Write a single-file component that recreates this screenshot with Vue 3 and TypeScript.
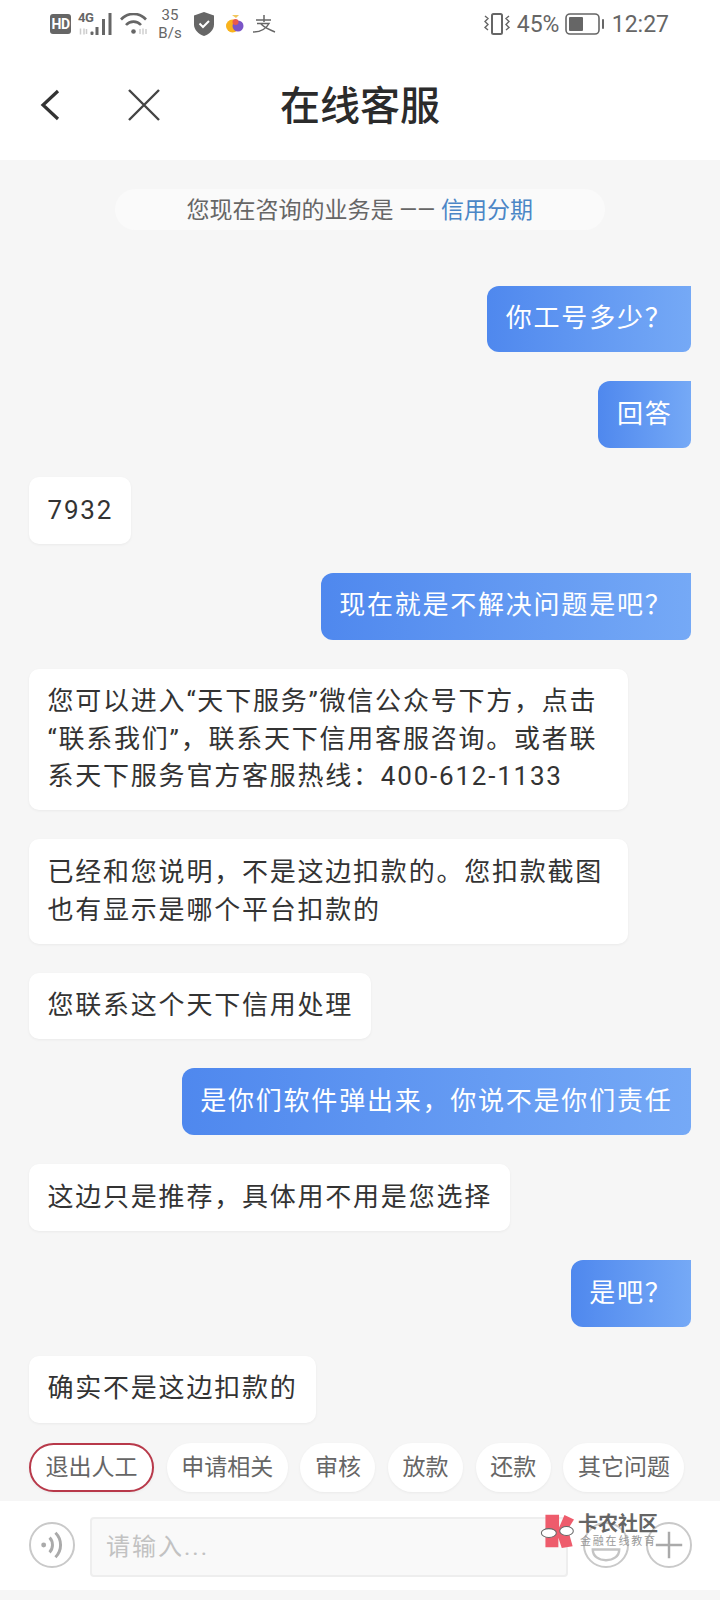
<script setup lang="ts">
interface Message {
  from: 'me' | 'agent'
  text: string
}

const messages: Message[] = [
  { from: 'me', text: '你工号多少？' },
  { from: 'me', text: '回答' },
  { from: 'agent', text: '7932' },
  { from: 'me', text: '现在就是不解决问题是吧？' },
  { from: 'agent', text: '您可以进入“天下服务”微信公众号下方，点击\u200b“联系我们”，联系天下信用客服咨询。或者联系天下服务官方客服热线：400-612-1133' },
  { from: 'agent', text: '已经和您说明，不是这边扣款的。您扣款截图也有显示是哪个平台扣款的' },
  { from: 'agent', text: '您联系这个天下信用处理' },
  { from: 'me', text: '是你们软件弹出来，你说不是你们责任' },
  { from: 'agent', text: '这边只是推荐，具体用不用是您选择' },
  { from: 'me', text: '是吧？' },
  { from: 'agent', text: '确实不是这边扣款的' },
]

const chips = ['退出人工', '申请相关', '审核', '放款', '还款', '其它问题']
</script>

<template>
  <div class="page">
    <div class="status">
      <div class="status-left">
        <span class="hd">HD</span>
        <span class="signal">
          <span class="g4">4G</span>
          <svg width="36" height="22" viewBox="0 0 36 22" fill="none">
            <path d="M2.500 15.500v6M6 15.500v6M8.500 16v5" stroke="#ccc" stroke-width="1.500" />
            <rect x="12.500" y="18.500" width="3" height="3.500" rx="1" fill="#666" />
            <rect x="17.500" y="14" width="3" height="8" fill="#666" />
            <rect x="24" y="6" width="3" height="16" fill="#666" />
            <rect x="30.500" y="0" width="3" height="22" fill="#666" />
          </svg>
        </span>
        <svg class="wifi" width="28" height="22" viewBox="0 0 28 22" fill="none">
          <path d="M1 6.500C8 -1 19 -1 26 6.500M6 12C10 7.500 17 7.500 21 12" stroke="#666" stroke-width="2.600" />
          <circle cx="13.500" cy="18.500" r="2.300" fill="#666" />
          <path d="M20 16v5M23 15.500v6M26 16v5" stroke="#ccc" stroke-width="1.400" />
        </svg>
        <span class="speed">35<br />B/s</span>
        <svg class="shield" width="22" height="24" viewBox="0 0 22 24">
          <path d="M11 0l10 3.500v9c0 5.500-4.500 9.500-10 11.500C5.500 22 1 18 1 12.500v-9z" fill="#666" />
          <path d="M6.500 11.500l3.500 3.500 6-6" stroke="#fff" stroke-width="2" fill="none" />
        </svg>
        <svg class="fruit" width="18" height="20" viewBox="0 0 18 20">
          <path d="M6 1h7l-3 3z" fill="#f2c75c" />
          <circle cx="6.500" cy="12" r="6.500" fill="#f9b31c" />
          <circle cx="12" cy="12" r="5.500" fill="#7a55c7" />
          <circle cx="9.500" cy="8" r="3" fill="#ea5a4c" />
        </svg>
        <svg class="zhi" width="23" height="18" viewBox="0 0 23 18" fill="none">
          <path d="M3 5H18M11 0V7M4 8.500H16C13 14 7 17 0 17M8 9C12 13 17 15 22 17" stroke="#666" stroke-width="1.500" />
        </svg>
      </div>
      <div class="status-right">
        <svg width="28" height="22" viewBox="0 0 28 22" fill="none">
          <rect x="9" y="1" width="10" height="20" rx="1.500" stroke="#666" stroke-width="2" />
          <path d="M2 3l3 2.500-3 3 3 3-3 3 3 2.500M26 3l-3 2.500 3 3-3 3 3 3-3 2.500" stroke="#666" stroke-width="1.400" />
        </svg>
        <span class="pct">45%</span>
        <svg class="battery" width="40" height="22" viewBox="0 0 40 22" fill="none">
          <rect x="1" y="1" width="33" height="20" rx="4" stroke="#666" stroke-width="1.600" />
          <rect x="4" y="4" width="14" height="14" rx="1" fill="#666" />
          <rect x="37" y="6" width="2" height="10" rx="1" fill="#666" />
        </svg>
        <span class="time">12:27</span>
      </div>
    </div>

    <header class="nav">
      <svg class="back" width="20" height="32" viewBox="0 0 20 32" fill="none">
        <path d="M18 2L3 16l15 14" stroke="#333" stroke-width="3.200" />
      </svg>
      <svg class="close" width="32" height="32" viewBox="0 0 32 32" fill="none">
        <path d="M1 1l30 30M31 1L1 31" stroke="#444" stroke-width="2.400" />
      </svg>
      <h1>在线客服</h1>
    </header>

    <main class="chat">
      <div class="topic">您现在咨询的业务是 —— <span>信用分期</span></div>
      <div class="rule"></div>
      <div v-for="(m, i) in messages" :key="i" class="row" :class="m.from">
        <div class="bubble">{{ m.text }}</div>
      </div>
    </main>

    <div class="chips">
      <span v-for="(c, i) in chips" :key="c" class="chip" :class="{ quit: i === 0 }">{{ c }}</span>
    </div>

    <footer class="composer">
      <svg class="round" width="46" height="46" viewBox="0 0 47 47" fill="none">
        <circle cx="23.500" cy="23.500" r="22.500" stroke="#c9c9c9" stroke-width="2" />
        <circle cx="15" cy="23.500" r="2.500" fill="#aaa" />
        <path d="M21 16c4 4 4 11 0 15M27 11c7 7 7 18 0 25" stroke="#aaa" stroke-width="3" />
      </svg>
      <div class="input">请输入...</div>
      <svg class="round" width="46" height="46" viewBox="0 0 47 47" fill="none">
        <circle cx="23.500" cy="23.500" r="22.500" stroke="#c9c9c9" stroke-width="2" />
        <path d="M10 28h27c0 7-6 11-13.500 11S10 35 10 28z" stroke="#c4c4c4" stroke-width="2.500" />
      </svg>
      <svg class="round" width="46" height="46" viewBox="0 0 47 47" fill="none">
        <circle cx="23.500" cy="23.500" r="22.500" stroke="#c9c9c9" stroke-width="2" />
        <path d="M23.500 10v27M10 23.500h27" stroke="#aaa" stroke-width="2.500" />
      </svg>
      <div class="mark">
        <svg width="34" height="34" viewBox="540 280 100 100">
          <path d="M556 282H596V320L612 283L640 296L622 325L636 375L604 380L594 350V378H556Z" fill="#ee5c6c" />
          <ellipse cx="566" cy="336" rx="22" ry="13" fill="#fff" stroke="#666" stroke-width="3" />
          <ellipse cx="618" cy="330" rx="20" ry="13" fill="#fff" stroke="#666" stroke-width="3" />
        </svg>
        <div class="mark-text">
          <b>卡农社区</b>
          <small>金融在线教育</small>
        </div>
      </div>
    </footer>
  </div>
</template>

<style>
html,
body {
  margin: 0;
  background: #f6f6f6;
}
</style>

<style scoped>
.page {
  width: 720px;
  height: 1600px;
  display: flex;
  flex-direction: column;
  background: #f6f6f6;
  overflow: hidden;
  font-family: Roboto, "Noto Sans CJK SC", sans-serif;
  color: #333;
}

.status {
  height: 50px;
  padding: 0 51px 2px 50px;
  box-sizing: border-box;
  display: flex;
  justify-content: space-between;
  align-items: center;
  background: #fff;
  color: #666;
}

.status-left,
.status-right {
  display: flex;
  align-items: center;
}

.hd {
  width: 21px;
  height: 20px;
  background: #666;
  color: #fff;
  border-radius: 3px;
  font-size: 14px;
  font-weight: 700;
  line-height: 20px;
  text-align: center;
  letter-spacing: -0.5px;
}

.signal {
  position: relative;
  margin-left: 7px;
  display: flex;
}

.g4 {
  position: absolute;
  left: 0;
  top: -2px;
  font-size: 13px;
  font-weight: 700;
  line-height: 14px;
  letter-spacing: -0.5px;
}

.wifi {
  margin-left: 6px;
}

.speed {
  width: 24px;
  margin-left: 10px;
  font-size: 15px;
  line-height: 18px;
  text-align: center;
}

.shield {
  margin-left: 11px;
}

.fruit {
  margin-left: 11px;
}

.zhi {
  margin-left: 9px;
}

.pct {
  margin-left: 5.500px;
  font-size: 23px;
}

.battery {
  margin-left: 5.800px;
}

.time {
  margin-left: 6.500px;
  font-size: 23px;
}

.nav {
  height: 110px;
  position: relative;
  display: flex;
  align-items: center;
  background: #fff;
}

.back {
  margin-left: 40px;
}

.close {
  margin-left: 68px;
}

.nav h1 {
  position: absolute;
  inset: 0;
  margin: 0;
  font-size: 40px;
  font-weight: 500;
  line-height: 114px;
  text-align: center;
  color: #2b2b2b;
}

.chat {
  flex: 1;
  min-height: 0;
  padding: 29px 29.500px 0 29px;
  display: flex;
  flex-direction: column;
}

.topic {
  align-self: center;
  width: 490px;
  height: 41px;
  border-radius: 21px;
  background: #fafafa;
  font-size: 23px;
  line-height: 44px;
  text-align: center;
  color: #666;
}

.topic span {
  color: #4b86c6;
}

.rule {
  align-self: flex-end;
  width: 266px;
  height: 1px;
  margin: 29px 12px 26.500px 0;
  background: #ececec;
}

.row {
  display: flex;
  margin-bottom: 28.900px;
}

.row.me {
  justify-content: flex-end;
}

.bubble {
  max-width: 562.500px;
  padding: 14.700px 18px 14.700px 18.500px;
  font-size: 26px;
  line-height: 37.500px;
  letter-spacing: 1.780px;
}

.me .bubble {
  background: linear-gradient(90deg, #4f88ee, #75a9f6);
  color: #fff;
  border-radius: 12px 0 8px 12px;
}

.agent .bubble {
  background: #fff;
  border-radius: 10px;
  box-shadow: 0 1px 3px rgba(0, 0, 0, 0.05);
}

.chips {
  height: 58px;
  padding-left: 29px;
  display: flex;
  gap: 12.700px;
}

.chip {
  height: 49px;
  padding: 0 14.500px;
  box-sizing: border-box;
  border-radius: 25px;
  background: #fff;
  box-shadow: 0 1px 3px rgba(0, 0, 0, 0.05);
  font-size: 23px;
  line-height: 49px;
  color: #666;
}

.chip.quit {
  border: 2px solid #b8394a;
  line-height: 45px;
}

.composer {
  height: 89px;
  margin-bottom: 10px;
  position: relative;
  padding: 0 29px;
  display: flex;
  align-items: center;
  background: #fff;
}

.input {
  flex: none;
  width: 478px;
  height: 60px;
  margin: 2px 15px 0 15px;
  padding-left: 14px;
  box-sizing: border-box;
  background: #f9f9f9;
  border: 2px solid #eeeeee;
  border-radius: 4px;
  font-size: 24px;
  line-height: 56px;
  letter-spacing: 2px;
  color: #c2c2c2;
}

.round {
  flex: none;
  margin-bottom: 2px;
}

.round + .round {
  margin-left: 17px;
}

.mark {
  position: absolute;
  left: 540px;
  top: 12px;
  display: flex;
  align-items: center;
  gap: 4px;
}

.mark-text {
  display: flex;
  flex-direction: column;
}

.mark-text b {
  font-size: 20px;
  line-height: 22px;
  color: #555;
  opacity: 0.9;
}

.mark-text small {
  padding-left: 2px;
  font-size: 11px;
  line-height: 14px;
  letter-spacing: 1.800px;
  color: #999;
}
</style>
